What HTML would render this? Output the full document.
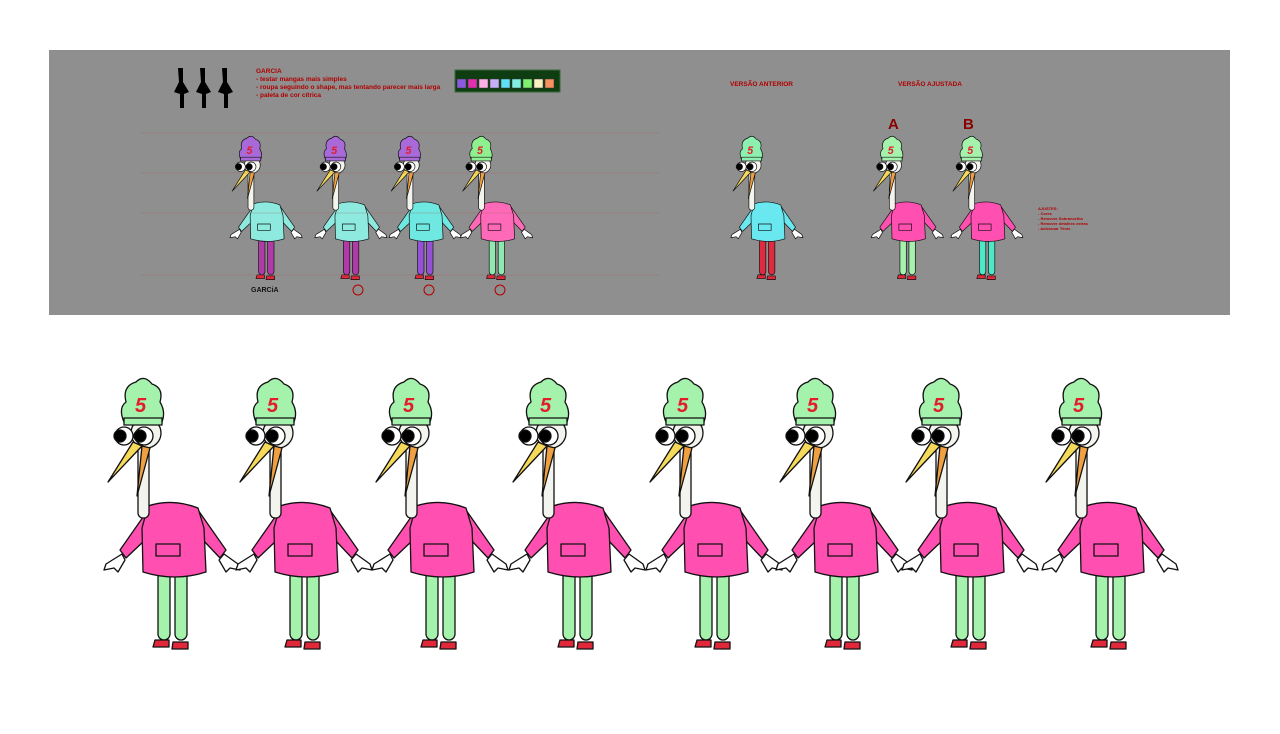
<!DOCTYPE html>
<html><head><meta charset="utf-8"><style>
body{margin:0;width:1280px;height:734px;background:#fff;overflow:hidden;font-family:"Liberation Sans",sans-serif;position:relative}
.panel{position:absolute;left:49px;top:50px;width:1181px;height:265px;background:#8f8f8f}
.t{position:absolute;color:#b00000;font-weight:bold;font-size:6.5px;line-height:8px}
</style></head><body>
<div class="panel"></div>
<svg width="1280" height="734" style="position:absolute;left:0;top:0">
<defs>
<symbol id="c" overflow="visible">
 <g stroke="#111" stroke-width="1.3" stroke-linejoin="round">
  <rect x="-12" y="188" width="12" height="74" rx="6" fill="var(--l)"/>
  <rect x="5" y="188" width="12" height="74" rx="6" fill="var(--l)"/>
  <path d="M-15 262 h14 v7 h-16z M3 264 h15 v7 h-16z" fill="#e0283a"/>
  <path d="M-22 132 L-50 172 L-44 180 L-25 162 Z" fill="var(--h)"/>
  <path d="M28 132 L56 172 L50 180 L33 162 Z" fill="var(--h)"/>
  <path d="M-22 128 Q2 120 28 130 L34 150 L36 194 Q5 204 -27 194 L-28 150 Z" fill="var(--h)"/>
  <rect x="-14" y="166" width="24" height="12" fill="var(--h)"/>
  <path d="M-48 176 L-64 186 L-66 192 L-56 190 L-52 194 L-45 182 Z M54 176 L68 186 L70 192 L60 190 L56 194 L49 182 Z" fill="#fff"/>
  <rect x="-32" y="62" width="11" height="78" rx="5" fill="#f4f4ee"/>
  <circle cx="-24" cy="55" r="15" fill="#f4f4ee"/>
  <path d="M-37 64 L-62 104 L-28 68Z" fill="#f5d95a"/>
  <path d="M-28 68 L-33 118 L-20 70Z" fill="#f0a040"/>
  <circle cx="-46" cy="58" r="9" fill="#fff"/><circle cx="-50" cy="58" r="6" fill="#000"/>
  <circle cx="-26" cy="58" r="9" fill="#fff"/><circle cx="-30" cy="58" r="6" fill="#000"/>
  <path d="M-46 44 Q-52 30 -44 24 Q-48 8 -34 4 Q-26 -4 -18 6 Q-6 10 -10 24 Q-4 34 -8 44 Z" fill="var(--k)"/>
  <rect x="-46" y="40" width="38" height="7" fill="var(--k)"/>
 </g>
 <text x="-35" y="34" font-size="20" font-weight="bold" font-style="italic" fill="#e21d2b" font-family="Liberation Sans">5</text>
</symbol>
</defs>
<g style="--h:#ff4fb0;--l:#a4f2ac;--k:#a4f2ac">
 <use href="#c" x="170" y="378"/>
 <use href="#c" x="302" y="378"/>
 <use href="#c" x="438" y="378"/>
 <use href="#c" x="575" y="378"/>
 <use href="#c" x="712" y="378"/>
 <use href="#c" x="842" y="378"/>
 <use href="#c" x="968" y="378"/>
 <use href="#c" x="1108" y="378"/>
</g>
<g transform="translate(0,136) scale(0.53)">
 <use href="#c" x="500" y="0" style="--h:#8eeadf;--l:#b03aa8;--k:#a86ad8"/>
 <use href="#c" x="660" y="0" style="--h:#8eeadf;--l:#b03aa8;--k:#a86ad8"/>
 <use href="#c" x="800" y="0" style="--h:#6ee8e0;--l:#9650d8;--k:#a86ad8"/>
 <use href="#c" x="935" y="0" style="--h:#ff6ab8;--l:#8ee8b0;--k:#8ef08e"/>
 <use href="#c" x="1445" y="0" style="--h:#6ae8f0;--l:#e02a40;--k:#8ef0b0"/>
 <use href="#c" x="1710" y="0" style="--h:#ff4fb0;--l:#a4f2ac;--k:#a4f2ac"/>
 <use href="#c" x="1860" y="0" style="--h:#ff4fb0;--l:#4ee8c8;--k:#a4f2ac"/>
</g>
<g stroke="#a06060" stroke-width="0.5" opacity="0.6">
 <line x1="140" y1="133" x2="660" y2="133"/><line x1="140" y1="173" x2="660" y2="173"/>
 <line x1="140" y1="213" x2="660" y2="213"/><line x1="140" y1="275" x2="660" y2="275"/>
</g>
<g fill="#000">
 <path d="M178 68 h5 v14 l6 10 -5 2 v14 h-4 v-14 l-6 -2 5 -10z"/>
 <path d="M200 68 h5 v14 l6 10 -5 2 v14 h-4 v-14 l-6 -2 5 -10z"/>
 <path d="M222 68 h5 v14 l6 10 -5 2 v14 h-4 v-14 l-6 -2 5 -10z"/>
</g>
<rect x="455" y="70" width="105" height="22" fill="#0e3d12" stroke="#3a6a3a"/>
<g stroke="#333" stroke-width="0.5">
<rect x="457" y="79" width="9" height="9" fill="#8b5ae0"/><rect x="468" y="79" width="9" height="9" fill="#e030b0"/>
<rect x="479" y="79" width="9" height="9" fill="#ffb0e8"/><rect x="490" y="79" width="9" height="9" fill="#c8b0f8"/>
<rect x="501" y="79" width="9" height="9" fill="#60e0f8"/><rect x="512" y="79" width="9" height="9" fill="#80f0e0"/>
<rect x="523" y="79" width="9" height="9" fill="#80f070"/><rect x="534" y="79" width="9" height="9" fill="#f8f0c0"/>
<rect x="545" y="79" width="9" height="9" fill="#f89060"/>
</g>
<g fill="none" stroke="#b00000" stroke-width="1">
<circle cx="358" cy="290" r="5"/><circle cx="429" cy="290" r="5"/><circle cx="500" cy="290" r="5"/>
</g>
</svg>
<div class="t" style="left:256px;top:68px">GARCIA<br>- testar mangas mais simples<br>- roupa seguindo o shape, mas tentando parecer mais larga<br>- paleta de cor cítrica</div>
<div class="t" style="left:730px;top:81px">VERSÃO ANTERIOR</div>
<div class="t" style="left:898px;top:81px">VERSÃO AJUSTADA</div>
<div class="t" style="left:888px;top:117px;font-size:15px;line-height:16px;color:#8a0000">A</div>
<div class="t" style="left:963px;top:117px;font-size:15px;line-height:16px;color:#8a0000">B</div>
<div class="t" style="left:1038px;top:206px;font-size:4px;line-height:5px">AJUSTES:<br>- Cores<br>- Remover Sobrancelha<br>- Remover detalhes extras<br>- Adicionar Tênis</div>
<div class="t" style="left:251px;top:287px;color:#111;font-size:7px">GARCiA</div>
</body></html>
